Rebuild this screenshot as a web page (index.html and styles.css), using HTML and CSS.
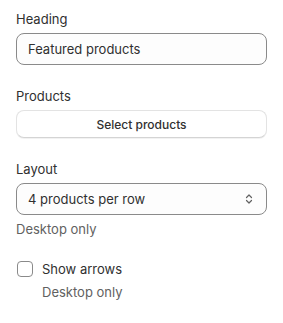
FILE: index.html
```html
<!DOCTYPE html>
<html lang="en">
<head>
  <meta charset="UTF-8" />
  <title>Section settings</title>
  <link rel="stylesheet" href="styles.css">
</head>
<body>

<div class="painel">
  <div class="campo">
    <label class="rotulo" for="heading">Heading</label>
    <input class="entrada" id="heading" type="text" value="Featured products">
  </div>

  <div class="campo">
    <div class="rotulo">Products</div>
    <button class="botao">Select products</button>
  </div>

  <div class="campo">
    <label class="rotulo" for="layout">Layout</label>
    <div class="seletor">
      <span>4 products per row</span>
      <svg width="10" height="12" viewBox="0 0 10 12" fill="none" stroke="#616161" stroke-width="1.2" stroke-linecap="round" stroke-linejoin="round">
        <path d="M2.5 4.5 L5 2 L7.5 4.5" />
        <path d="M2.5 7.5 L5 10 L7.5 7.5" />
      </svg>
    </div>
    <div class="ajuda">Desktop only</div>
  </div>

  <div class="marcar">
    <span class="caixa"></span>
    <div>
      <div class="marcar-texto">Show arrows</div>
      <div class="ajuda">Desktop only</div>
    </div>
  </div>
</div>

</body>
</html>
```

FILE: styles.css
```css
* {
  box-sizing: border-box;
}

body {
  margin: 0;
  font-family: Inter, "Noto Sans", sans-serif;
  font-size: 13px;
  color: #303030;
  background-color: #ffffff;
}

.painel {
  padding: 9px 16px 16px;
}

.campo {
  margin-bottom: 21px;
}

.rotulo {
  display: block;
  line-height: 20px;
  margin-bottom: 4px;
}

.entrada {
  display: block;
  width: 100%;
  height: 32px;
  padding: 0 11px;
  font-family: inherit;
  font-size: 13px;
  color: #303030;
  background-color: #fdfdfd;
  border: 1px solid #8a8a8a;
  border-radius: 8px;
  outline: none;
}

.botao {
  display: block;
  width: 100%;
  height: 28px;
  font-family: inherit;
  font-size: 12px;
  font-weight: 500;
  color: #303030;
  background-color: #ffffff;
  border: 1px solid #e3e3e3;
  border-bottom-color: #d4d4d4;
  border-radius: 8px;
  box-shadow: 0 1px 0 rgba(0, 0, 0, 0.05);
  cursor: pointer;
}

.seletor {
  display: flex;
  justify-content: space-between;
  align-items: center;
  height: 32px;
  padding: 0 12px 0 11px;
  background-color: #fdfdfd;
  border: 1px solid #8a8a8a;
  border-radius: 8px;
}

.ajuda {
  color: #616161;
  line-height: 20px;
  margin-top: 4px;
}

.marcar {
  display: flex;
  gap: 9px;
  margin-top: -1px;
}

.caixa {
  width: 16px;
  height: 16px;
  margin: 2px 0 0 1px;
  border: 1px solid #8a8a8a;
  border-radius: 4px;
  flex-shrink: 0;
}

.marcar-texto {
  line-height: 20px;
}

.marcar .ajuda {
  margin-top: 3px;
}
```
